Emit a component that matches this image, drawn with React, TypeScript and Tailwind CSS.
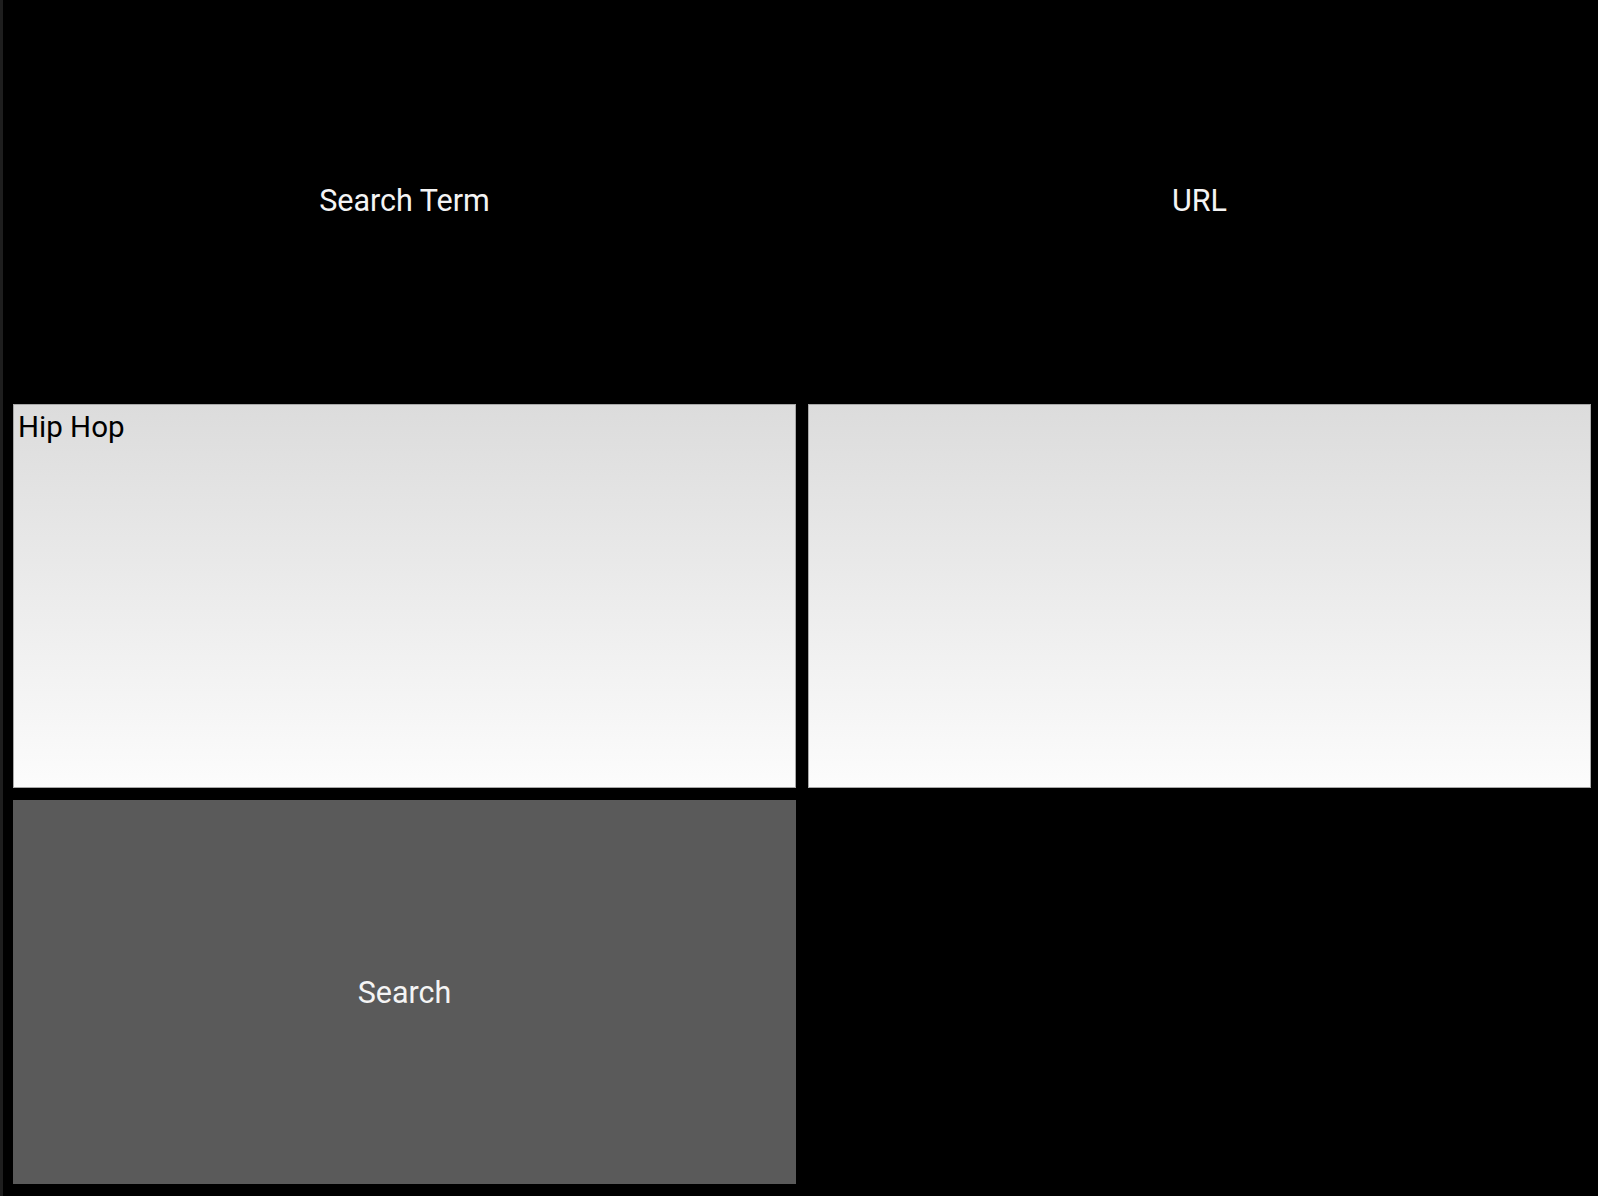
import React from "react";

export default function App() {
  return (
    <div className="flex h-[1196px] w-[1598px] bg-black" style={{ fontFamily: "Roboto, 'Liberation Sans', sans-serif" }}>
      <div className="w-[3px] shrink-0 bg-[#1e1e1e]" />
      <div className="flex-1 pl-[10px] pt-[8px] pr-[7px] pb-[12px]">
        <div className="grid grid-cols-[783px_783px] grid-rows-[384px_384px_384px] gap-[12px]">
          <div className="flex items-center justify-center pt-[2px] text-[30.5px] text-[#f4f4f4]">Search Term</div>
          <div className="flex items-center justify-center pt-[2px] text-[30.5px] text-[#f4f4f4]">URL</div>
          <div className="border border-[#a8a8a8] bg-gradient-to-b from-[#dcdcdc] to-[#fcfcfc] px-[4px] pt-[4px] text-[29.5px] leading-[36px] text-black">
            Hip Hop
          </div>
          <div className="border border-[#a8a8a8] bg-gradient-to-b from-[#dcdcdc] to-[#fcfcfc]" />
          <div className="flex items-center justify-center pt-[2px] bg-[#5a5a5a] text-[30.5px] text-[#f4f4f4]">Search</div>
          <div />
        </div>
      </div>
    </div>
  );
}
